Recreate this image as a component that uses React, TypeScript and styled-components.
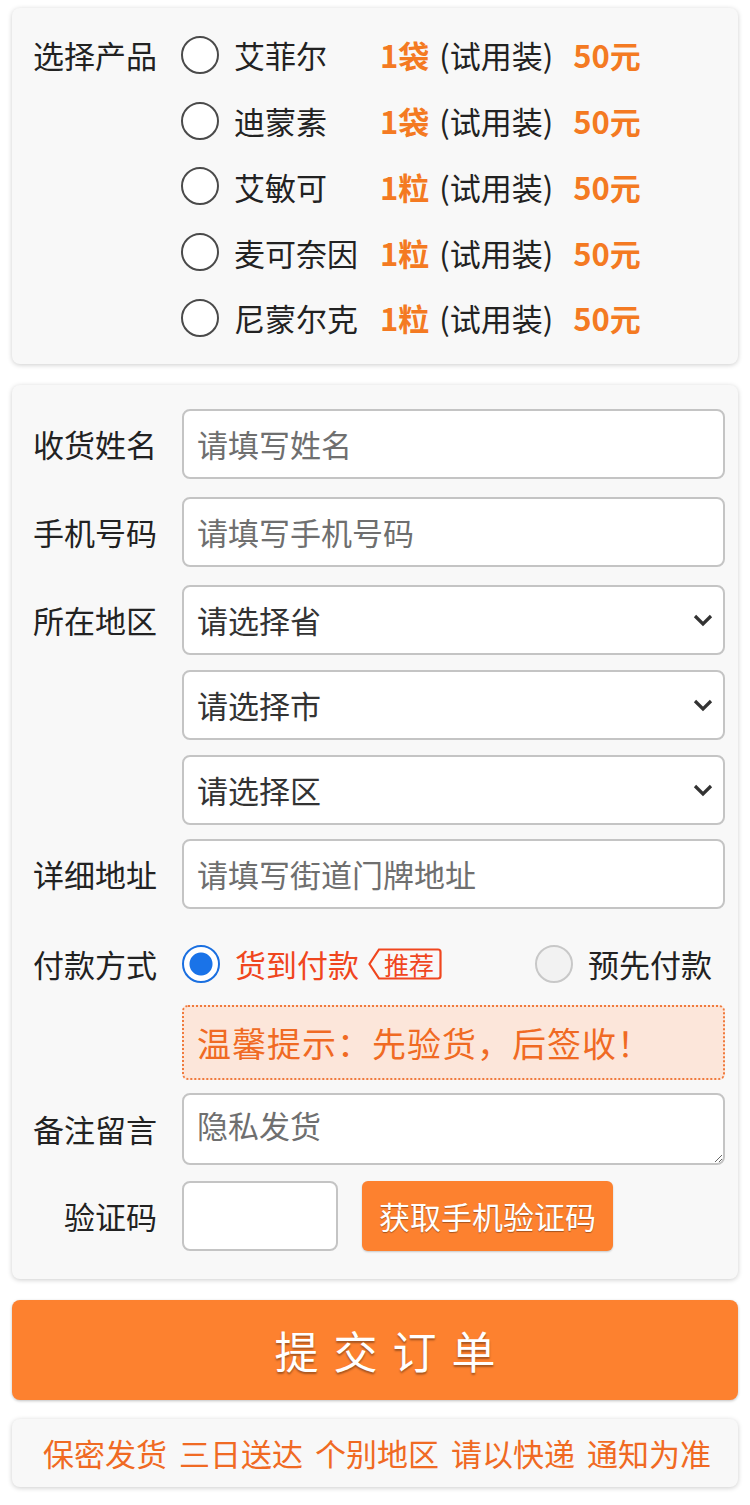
import React from "react"
import styled, { createGlobalStyle } from "styled-components"

const GlobalStyle = createGlobalStyle`
  body {
    margin: 0;
    background: #fff;
    font-family: "Noto Sans CJK SC", "Noto Sans", sans-serif;
    color: #222;
  }
  * { box-sizing: border-box; }
`

const Page = styled.div`
  padding: 8px 12px 16px;
  display: flex;
  flex-direction: column;
`

const Card = styled.div<{ $gap?: number }>`
  background: #f8f8f8;
  border-radius: 8px;
  box-shadow: 0 1px 5px rgba(0, 0, 0, 0.2);
  margin-top: ${p => p.$gap ?? 0}px;
`

/* ---------- product card ---------- */

const ProductCard = styled(Card)`
  display: grid;
  grid-template-columns: 148px 1fr;
  padding: 14px 0 13px 21px;
`

const SideLabel = styled.div`
  font-size: 31px;
  line-height: 66px;
  white-space: nowrap;
`

const ProductList = styled.div`
  display: flex;
  flex-direction: column;
`

const ProductRow = styled.label`
  height: 65.75px;
  display: flex;
  align-items: center;
  font-size: 31px;
  white-space: nowrap;
`

const Radio = styled.span<{ $kind: "dark" | "light" | "checked" }>`
  flex: none;
  width: 38px;
  height: 38px;
  border-radius: 50%;
  margin-right: 15px;
  border: 2px solid
    ${p => (p.$kind === "dark" ? "#4a4a4a" : p.$kind === "light" ? "#c8c8c8" : "#1a6fe0")};
  background: ${p =>
    p.$kind === "checked"
      ? "radial-gradient(circle, #1a73e8 0 11px, #fff 12px)"
      : p.$kind === "light"
      ? "#f2f2f2"
      : "#fff"};
`

const ProductName = styled.span`
  width: 146px;
`

const Hot = styled.b`
  color: #f47a22;
  font-weight: 700;
`

const Pack = styled.span`
  margin: 0 20px 0 10px;
`

/* ---------- form card ---------- */

const FormCard = styled(Card)`
  padding: 24px 13px 28px 21px;
  display: flex;
  flex-direction: column;
`

const Field = styled.div<{ $top?: number }>`
  display: grid;
  grid-template-columns: 124px 1fr;
  column-gap: 25px;
  margin-top: ${p => p.$top ?? 0}px;
`

const FieldLabel = styled.div<{ $h?: number }>`
  font-size: 31px;
  line-height: ${p => p.$h ?? 70}px;
  text-align: right;
  white-space: nowrap;
  align-self: start;
`

const boxStyle = `
  height: 70px;
  border: 2px solid #c4c4c4;
  border-radius: 8px;
  background: #fff;
  font-family: "Noto Sans CJK SC", sans-serif;
  font-size: 31px;
  color: #333;
  padding: 0 13px;
  outline: none;
`

const TextInput = styled.input<{ $w?: number }>`
  ${boxStyle}
  width: ${p => (p.$w ? `${p.$w}px` : "100%")};
  &::placeholder { color: #6f6f6f; }
`

const SelectStack = styled.div`
  display: flex;
  flex-direction: column;
  gap: 15px;
`

const SelectWrap = styled.div`
  position: relative;
`

const Select = styled.select`
  ${boxStyle}
  width: 100%;
  appearance: none;
  -webkit-appearance: none;
`

const Chevron = styled.svg`
  position: absolute;
  right: 12px;
  top: 28px;
  pointer-events: none;
`

const TextArea = styled.textarea`
  ${boxStyle}
  height: 72px;
  width: 100%;
  padding-top: 10px;
  line-height: 1.3;
  resize: vertical;
  &::placeholder { color: #6f6f6f; }
`

const PayRow = styled.div`
  height: 70px;
  display: flex;
  align-items: center;
  font-size: 31px;
  white-space: nowrap;
`

const PayOption = styled.label<{ $active?: boolean }>`
  display: flex;
  align-items: center;
  color: ${p => (p.$active ? "#f0461e" : "#222")};
  &:last-child {
    margin-left: auto;
    margin-right: 13px;
  }
`

const Tag = styled.span`
  position: relative;
  width: 74px;
  height: 32px;
  margin-left: 9px;
  padding-left: 16px;
  display: inline-flex;
  align-items: center;
  font-size: 25px;
  color: #f0461e;
`

const TagOutline = styled.svg`
  position: absolute;
  left: 0;
  top: 0;
`

const Notice = styled.div`
  height: 75px;
  border: 2px dotted #f07a3c;
  border-radius: 6px;
  background: #fce6da;
  color: #f06a23;
  font-size: 34px;
  letter-spacing: 1px;
  display: flex;
  align-items: center;
  padding-left: 13px;
  white-space: nowrap;
`

const VerifyRow = styled.div`
  display: flex;
  gap: 24px;
`

const SmsButton = styled.button`
  height: 70px;
  width: 251px;
  border: none;
  border-radius: 6px;
  background: #fd812f;
  color: #fff;
  font-family: "Noto Sans CJK SC", sans-serif;
  font-size: 31px;
  text-shadow: 0 1px 1px rgba(0, 0, 0, 0.35);
  box-shadow: 0 1px 2px rgba(0, 0, 0, 0.2);
`

/* ---------- bottom ---------- */

const SubmitButton = styled.button`
  margin-top: 21px;
  height: 100px;
  border: none;
  border-radius: 8px;
  background: #fd812f;
  color: #fff;
  font-family: "Noto Sans CJK SC", sans-serif;
  font-size: 44px;
  letter-spacing: 15px;
  text-indent: 35px;
  text-shadow: 0 2px 2px rgba(0, 0, 0, 0.35);
  box-shadow: 0 1px 3px rgba(0, 0, 0, 0.25);
`

const Footer = styled(Card)`
  height: 68px;
  display: flex;
  align-items: center;
  justify-content: center;
  color: #f06a23;
  font-size: 31px;
  word-spacing: 5px;
  padding-left: 4px;
  white-space: nowrap;
`

const products = [
  { name: "艾菲尔", unit: "1袋" },
  { name: "迪蒙素", unit: "1袋" },
  { name: "艾敏可", unit: "1粒" },
  { name: "麦可奈因", unit: "1粒" },
  { name: "尼蒙尔克", unit: "1粒" },
]

const ChevronIcon = () => (
  <Chevron width="20" height="14" viewBox="0 0 20 14">
    <polyline points="2,3 10,11 18,3" fill="none" stroke="#333" strokeWidth="3.2" />
  </Chevron>
)

const RegionSelect = ({ text }: { text: string }) => (
  <SelectWrap>
    <Select defaultValue="">
      <option value="">{text}</option>
    </Select>
    <ChevronIcon />
  </SelectWrap>
)

export default function App() {
  return (
    <Page>
      <GlobalStyle />
      <ProductCard>
        <SideLabel>选择产品</SideLabel>
        <ProductList>
          {products.map(p => (
            <ProductRow key={p.name}>
              <Radio $kind="dark" />
              <ProductName>{p.name}</ProductName>
              <Hot>{p.unit}</Hot>
              <Pack>(试用装)</Pack>
              <Hot>50元</Hot>
            </ProductRow>
          ))}
        </ProductList>
      </ProductCard>

      <FormCard $gap={21}>
        <Field>
          <FieldLabel>收货姓名</FieldLabel>
          <TextInput placeholder="请填写姓名" />
        </Field>
        <Field $top={18}>
          <FieldLabel>手机号码</FieldLabel>
          <TextInput placeholder="请填写手机号码" />
        </Field>
        <Field $top={18}>
          <FieldLabel>所在地区</FieldLabel>
          <SelectStack>
            <RegionSelect text="请选择省" />
            <RegionSelect text="请选择市" />
            <RegionSelect text="请选择区" />
          </SelectStack>
        </Field>
        <Field $top={14}>
          <FieldLabel>详细地址</FieldLabel>
          <TextInput placeholder="请填写街道门牌地址" />
        </Field>
        <Field $top={20}>
          <FieldLabel>付款方式</FieldLabel>
          <PayRow>
            <PayOption $active>
              <Radio $kind="checked" />
              货到付款
              <Tag>
                <TagOutline width="74" height="32" viewBox="0 0 74 32">
                  <path
                    d="M11 1.5 H70 a2.5 2.5 0 0 1 2.5 2.5 V28 a2.5 2.5 0 0 1 -2.5 2.5 H11 L1.5 16 Z"
                    fill="none"
                    stroke="#f0461e"
                    strokeWidth="2.2"
                  />
                </TagOutline>
                推荐
              </Tag>
            </PayOption>
            <PayOption>
              <Radio $kind="light" />
              预先付款
            </PayOption>
          </PayRow>
        </Field>
        <Field $top={6}>
          <span />
          <Notice>温馨提示：先验货，后签收！</Notice>
        </Field>
        <Field $top={13}>
          <FieldLabel $h={72}>备注留言</FieldLabel>
          <TextArea placeholder="隐私发货" />
        </Field>
        <Field $top={16}>
          <FieldLabel>验证码</FieldLabel>
          <VerifyRow>
            <TextInput $w={156} />
            <SmsButton>获取手机验证码</SmsButton>
          </VerifyRow>
        </Field>
      </FormCard>

      <SubmitButton>提交订单</SubmitButton>

      <Footer $gap={19}>保密发货 三日送达 个别地区 请以快递 通知为准</Footer>
    </Page>
  )
}
